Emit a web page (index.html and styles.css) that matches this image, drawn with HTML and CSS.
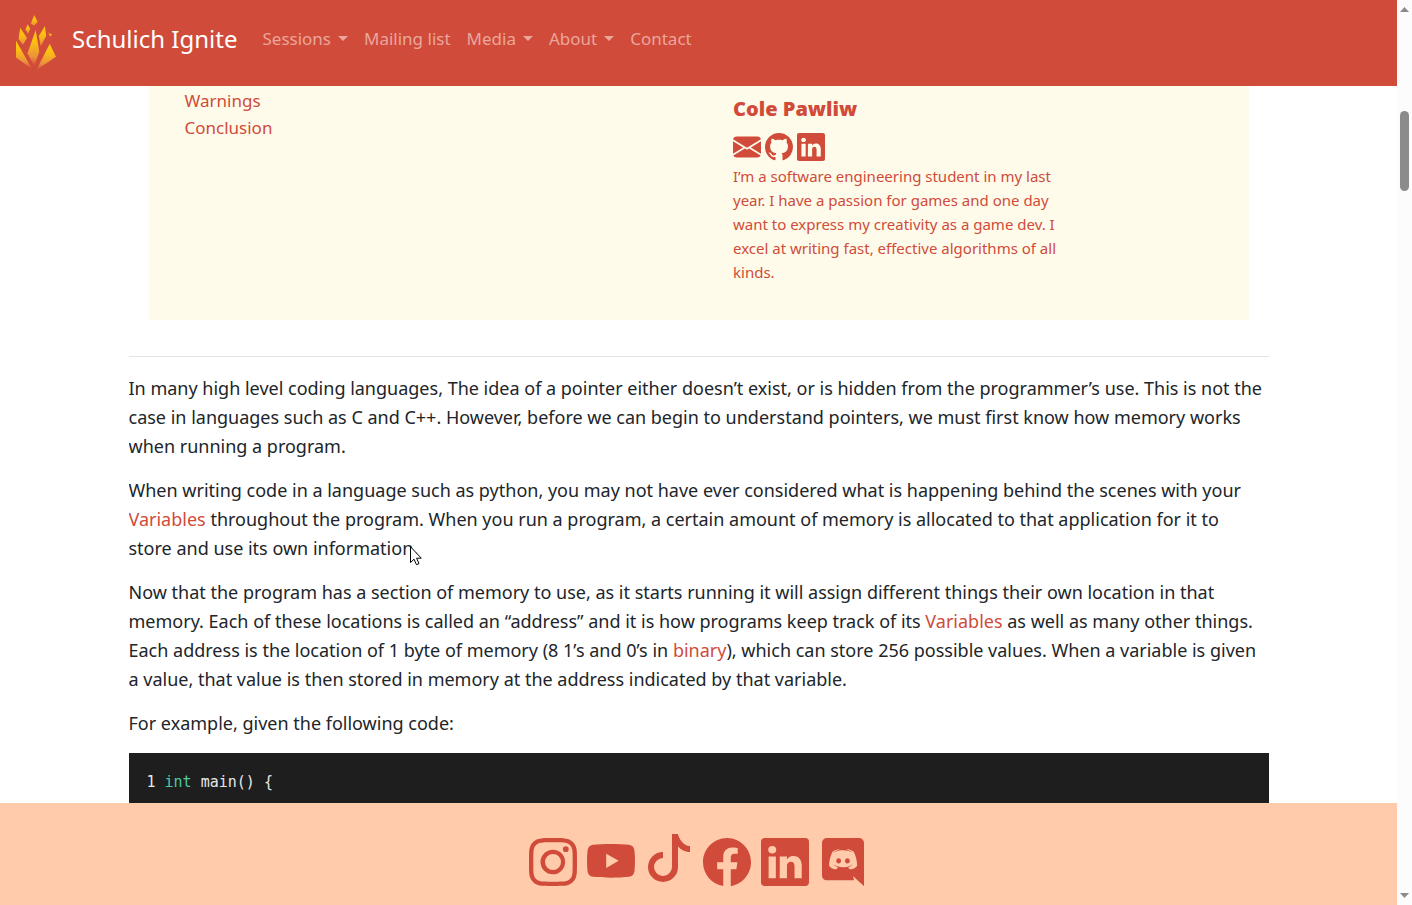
FILE: index.html
```html
<!DOCTYPE html>
<html lang="en">
<head>
<meta charset="utf-8">
<title>Pointers - Schulich Ignite</title>
<link rel="stylesheet" href="styles.css">
</head>
<body>
<div class="page">
  <header class="navbar">
    <a class="brand" href="#">
      <svg class="brand-logo" viewBox="0 0 40 56" aria-hidden="true">
        <defs>
          <linearGradient id="flame" x1="0" y1="0" x2="0" y2="1">
            <stop offset="0.4" stop-color="#fdc20f"/>
            <stop offset="1" stop-color="#ea8d38"/>
          </linearGradient>
          <linearGradient id="base" x1="0" y1="0" x2="0" y2="1">
            <stop offset="0.3" stop-color="#fdc20f"/>
            <stop offset="0.75" stop-color="#eb923a"/>
            <stop offset="1" stop-color="#d64b38"/>
          </linearGradient>
        </defs>
        <g fill="url(#flame)">
          <path d="M18.300 1L21.700 8L18 11.800L14.800 9.500Z"/>
          <path d="M11.700 10.300L14.200 15L12 20L9.500 15.300Z"/>
          <path d="M4.300 13.700L10.900 24L7 30.800L2.500 25Z"/>
          <path d="M28.900 12L30.200 22L24.700 32L22.800 22Z"/>
          <path d="M32.300 18.300L33.600 19.800L36.300 20L34 23Z"/>
        </g>
        <g fill="url(#base)">
          <path d="M19.700 16L23.300 37.700L18.300 52L11.500 39.300Z"/>
          <path d="M0 26.500L16 55L0 43.500Z"/>
          <path d="M33.700 29.800L40 42.700L20.500 56Z"/>
        </g>
      </svg>
      <span>Schulich Ignite</span>
    </a>
    <nav class="nav">
      <button class="nav-item dropdown" type="button">Sessions</button>
      <a class="nav-item" href="#">Mailing list</a>
      <button class="nav-item dropdown" type="button">Media</button>
      <button class="nav-item dropdown" type="button">About</button>
      <a class="nav-item" href="#">Contact</a>
    </nav>
  </header>

  <main class="content">
    <section class="card">
      <nav class="toc">
        <a href="#">Warnings</a>
        <a href="#">Conclusion</a>
      </nav>
      <div class="author">
        <h2 class="author-name">Cole Pawliw</h2>
        <div class="author-links">
          <a href="#" aria-label="Email"><svg viewBox="0 0 16 16"><path d="M.05 3.555A2 2 0 0 1 2 2h12a2 2 0 0 1 1.950 1.555L8 8.414.05 3.555ZM0 4.697v7.104l5.803-3.558L0 4.697ZM6.761 8.830l-6.570 4.027A2 2 0 0 0 2 14h12a2 2 0 0 0 1.808-1.144l-6.570-4.027L8 9.586l-1.239-.757Zm3.436-.586L16 11.801V4.697l-5.803 3.546Z"/></svg></a>
          <a href="#" aria-label="GitHub"><svg viewBox="0 0 16 16"><path d="M8 0C3.580 0 0 3.580 0 8c0 3.540 2.290 6.530 5.470 7.590.4.070.55-.17.55-.38 0-.19-.01-.82-.01-1.490-2.010.37-2.530-.49-2.690-.94-.09-.23-.48-.94-.82-1.130-.28-.15-.68-.52-.01-.53.63-.01 1.080.58 1.230.82.72 1.210 1.870.87 2.330.66.07-.52.28-.87.51-1.070-1.780-.2-3.640-.89-3.640-3.950 0-.87.31-1.590.82-2.150-.08-.2-.36-1.020.08-2.120 0 0 .67-.21 2.200.82.64-.18 1.320-.27 2-.27.68 0 1.360.09 2 .27 1.530-1.040 2.200-.82 2.200-.82.44 1.100.16 1.920.08 2.120.51.56.82 1.270.82 2.150 0 3.070-1.870 3.750-3.650 3.950.29.25.54.73.54 1.480 0 1.070-.01 1.930-.01 2.200 0 .21.15.46.55.38A8.012 8.012 0 0 0 16 8c0-4.420-3.580-8-8-8z"/></svg></a>
          <a href="#" aria-label="LinkedIn"><svg viewBox="0 0 16 16"><path d="M0 1.146C0 .513.526 0 1.175 0h13.650C15.474 0 16 .513 16 1.146v13.708c0 .633-.526 1.146-1.175 1.146H1.175C.526 16 0 15.487 0 14.854V1.146zm4.943 12.248V6.169H2.542v7.225h2.401zm-1.200-8.212c.837 0 1.358-.554 1.358-1.248-.015-.709-.52-1.248-1.342-1.248-.822 0-1.359.54-1.359 1.248 0 .694.521 1.248 1.327 1.248h.016zm4.908 8.212V9.359c0-.216.016-.432.08-.586.173-.431.568-.878 1.232-.878.869 0 1.216.662 1.216 1.634v3.865h2.401V9.250c0-2.220-1.184-3.252-2.764-3.252-1.274 0-1.845.7-2.165 1.193v.025h-.016a5.540 5.540 0 0 1 .016-.025V6.169h-2.400c.03.678 0 7.225 0 7.225h2.400z"/></svg></a>
        </div>
        <p class="author-bio">I’m a software engineering student in my last<br>year. I have a passion for games and one day<br>want to express my creativity as a game dev. I<br>excel at writing fast, effective algorithms of all<br>kinds.</p>
      </div>
    </section>

    <hr class="divider">

    <article class="article">
      <p>In many high level coding languages, The idea of a pointer either doesn’t exist, or is hidden from the programmer’s use. This is not the<br>case in languages such as C and C++. However, before we can begin to understand pointers, we must first know how memory works<br>when running a program.</p>
      <p>When writing code in a language such as python, you may not have ever considered what is happening behind the scenes with your<br><a href="#">Variables</a> throughout the program. When you run a program, a certain amount of memory is allocated to that application for it to<br>store and use its own information.</p>
      <p>Now that the program has a section of memory to use, as it starts running it will assign different things their own location in that<br>memory. Each of these locations is called an “address” and it is how programs keep track of its <a href="#">Variables</a> as well as many other things.<br>Each address is the location of 1 byte of memory (8 1’s and 0’s in <a href="#">binary</a>), which can store 256 possible values. When a variable is given<br>a value, that value is then stored in memory at the address indicated by that variable.</p>
      <p>For example, given the following code:</p>
      <pre class="code"><code>1 <span class="type">int</span> main() {</code></pre>
    </article>
  </main>

  <footer class="footer">
    <a href="#" aria-label="Instagram"><svg viewBox="0 0 16 16"><path d="M8 0C5.829 0 5.556.01 4.703.048 3.850.088 3.269.222 2.760.42a3.917 3.917 0 0 0-1.417.923A3.927 3.927 0 0 0 .42 2.760C.222 3.268.087 3.850.048 4.700.01 5.555 0 5.827 0 8.001c0 2.172.01 2.444.048 3.297.04.852.174 1.433.372 1.942.205.526.478.972.923 1.417.444.445.89.719 1.416.923.51.198 1.090.333 1.942.372C5.555 15.990 5.827 16 8 16s2.444-.01 3.298-.048c.851-.04 1.434-.174 1.943-.372a3.916 3.916 0 0 0 1.416-.923c.445-.445.718-.891.923-1.417.197-.509.332-1.090.372-1.942C15.990 10.445 16 10.173 16 8s-.01-2.445-.048-3.299c-.04-.851-.175-1.433-.372-1.941a3.926 3.926 0 0 0-.923-1.417A3.911 3.911 0 0 0 13.240.42c-.51-.198-1.092-.333-1.943-.372C10.443.01 10.172 0 7.998 0h.003zm-.717 1.442h.718c2.136 0 2.389.007 3.232.046.78.035 1.204.166 1.486.275.373.145.64.319.92.599.28.28.453.546.598.92.11.281.24.705.275 1.485.039.843.047 1.096.047 3.231s-.008 2.389-.047 3.232c-.035.78-.166 1.203-.275 1.485a2.470 2.470 0 0 1-.599.919c-.28.28-.546.453-.92.598-.28.11-.704.24-1.485.276-.843.038-1.096.047-3.232.047s-2.390-.009-3.233-.047c-.78-.036-1.203-.166-1.485-.276a2.478 2.478 0 0 1-.92-.598 2.480 2.480 0 0 1-.6-.92c-.109-.281-.24-.705-.275-1.485-.038-.843-.046-1.096-.046-3.233 0-2.136.008-2.388.046-3.231.036-.78.166-1.204.276-1.486.145-.373.319-.64.599-.92.28-.28.546-.453.92-.598.282-.11.705-.24 1.485-.276.738-.034 1.024-.044 2.515-.045v.002zm4.988 1.328a.96.96 0 1 0 0 1.920.96.96 0 0 0 0-1.920zm-4.270 1.122a4.109 4.109 0 1 0 0 8.217 4.109 4.109 0 0 0 0-8.217zm0 1.441a2.667 2.667 0 1 1 0 5.334 2.667 2.667 0 0 1 0-5.334z"/></svg></a>
    <a href="#" aria-label="YouTube"><svg viewBox="0 0 16 16"><path fill-rule="evenodd" d="M8 2C5.800 2 3.500 2.080 2 2.260C.9 2.400.3 3.100.16 4.300C-.05 6.300-.05 8.900.16 10.900C.3 12.100.9 12.800 2 12.940C5.200 13.320 10.800 13.320 14 12.940C15.100 12.800 15.700 12.100 15.840 10.900C16.050 8.900 16.050 6.300 15.840 4.300C15.700 3.100 15.100 2.400 14 2.260C12.500 2.080 10.200 2 8 2ZM6.400 5.209V9.990L10.557 7.604Z"/></svg></a>
    <a class="raised" href="#" aria-label="TikTok"><svg viewBox="0 0 16 16"><path d="M9 0h1.980c.144.715.54 1.617 1.235 2.512C12.895 3.389 13.797 4 15 4v2c-1.753 0-3.070-.814-4-1.829V11a5 5 0 1 1-5-5v2a3 3 0 1 0 3 3V0Z"/></svg></a>
    <a href="#" aria-label="Facebook"><svg viewBox="0 0 16 16"><path d="M16 8.049c0-4.446-3.582-8.050-8-8.050C3.580 0-.002 3.603-.002 8.050c0 4.017 2.926 7.347 6.750 7.951v-5.625h-2.030V8.050H6.750V6.275c0-2.017 1.195-3.131 3.022-3.131.876 0 1.791.157 1.791.157v1.980h-1.009c-.993 0-1.303.621-1.303 1.258v1.510h2.218l-.354 2.326H9.250V16c3.824-.604 6.750-3.934 6.750-7.951z"/></svg></a>
    <a href="#" aria-label="LinkedIn"><svg viewBox="0 0 16 16"><path d="M0 1.146C0 .513.526 0 1.175 0h13.650C15.474 0 16 .513 16 1.146v13.708c0 .633-.526 1.146-1.175 1.146H1.175C.526 16 0 15.487 0 14.854V1.146zm4.943 12.248V6.169H2.542v7.225h2.401zm-1.200-8.212c.837 0 1.358-.554 1.358-1.248-.015-.709-.52-1.248-1.342-1.248-.822 0-1.359.54-1.359 1.248 0 .694.521 1.248 1.327 1.248h.016zm4.908 8.212V9.359c0-.216.016-.432.08-.586.173-.431.568-.878 1.232-.878.869 0 1.216.662 1.216 1.634v3.865h2.401V9.250c0-2.220-1.184-3.252-2.764-3.252-1.274 0-1.845.7-2.165 1.193v.025h-.016a5.540 5.540 0 0 1 .016-.025V6.169h-2.400c.03.678 0 7.225 0 7.225h2.400z"/></svg></a>
    <a href="#" aria-label="Discord"><svg viewBox="0 0 16 16"><path d="M6.552 6.712c-.456 0-.816.4-.816.888s.368.888.816.888c.456 0 .816-.4.816-.888.008-.488-.36-.888-.816-.888zm2.920 0c-.456 0-.816.4-.816.888s.368.888.816.888c.456 0 .816-.4.816-.888s-.36-.888-.816-.888z"/><path d="M13.360 0H2.640C1.736 0 1 .736 1 1.648v10.816c0 .912.736 1.648 1.640 1.648h9.072l-.424-1.480 1.024.952.968.896L15 16V1.648C15 .736 14.264 0 13.360 0zm-3.088 10.448s-.288-.344-.528-.648c1.048-.296 1.448-.952 1.448-.952-.328.216-.64.368-.92.472-.4.168-.784.28-1.160.344a5.604 5.604 0 0 1-2.072-.008 6.716 6.716 0 0 1-1.176-.344 4.688 4.688 0 0 1-.584-.272c-.024-.016-.048-.024-.072-.04-.016-.008-.024-.016-.032-.024-.144-.08-.224-.136-.224-.136s.384.64 1.400.944c-.24.304-.536.664-.536.664-1.768-.056-2.440-1.216-2.440-1.216 0-2.576 1.152-4.664 1.152-4.664 1.152-.864 2.248-.84 2.248-.84l.08.096c-1.440.416-2.104 1.048-2.104 1.048s.176-.096.472-.232c.856-.376 1.536-.48 1.816-.504.048-.008.088-.016.136-.016a6.521 6.521 0 0 1 4.024.752s-.632-.6-1.992-1.016l.112-.128s1.096-.024 2.248.84c0 0 1.152 2.088 1.152 4.664 0 0-.68 1.160-2.448 1.216z"/></svg></a>
  </footer>
</div>

<div class="scrollbar" aria-hidden="true">
  <svg class="arrow" viewBox="0 0 9 5"><path d="M4.500 0L9 5H0Z"/></svg>
  <div class="track"><div class="thumb"></div></div>
  <svg class="arrow" viewBox="0 0 9 5"><path d="M0 0H9L4.500 5Z"/></svg>
</div>

<svg class="cursor" viewBox="0 0 12 20" aria-hidden="true"><path d="M.5.8V16.500L4 13.200L6.500 18.700L9 17.600L6.600 12.200H11.300Z"/></svg>
</body>
</html>
```

FILE: styles.css
```css
* {
  box-sizing: border-box;
}

body {
  margin: 0;
  height: 100vh;
  display: flex;
  overflow: hidden;
  background: #fff;
  color: #212529;
  font-family: "Segoe UI", "Noto Sans", sans-serif;
  font-size: 18px;
  line-height: 29px;
}

a {
  color: #d04b3a;
  text-decoration: none;
}

svg {
  display: block;
  fill: currentColor;
}

.page {
  flex: 1;
  min-width: 0;
  display: flex;
  flex-direction: column;
}

.navbar {
  display: flex;
  align-items: center;
  gap: 17px;
  padding: 14px 16px 16px;
  background: #d04b3a;
}

.brand {
  display: flex;
  align-items: center;
  gap: 16px;
  color: #fff;
  font-size: 24px;
  white-space: nowrap;
}

.brand span {
  padding-bottom: 8px;
}

.brand-logo {
  width: 40px;
  height: 56px;
}

.nav {
  display: flex;
  padding-bottom: 7px;
}

.nav-item {
  display: flex;
  align-items: center;
  padding: 0 8px;
  border: 0;
  background: none;
  color: #eba69b;
  font: inherit;
  font-size: 17px;
  white-space: nowrap;
}

.dropdown::after {
  content: "";
  margin-left: 7px;
  margin-bottom: 1px;
  border: 5px solid transparent;
  border-top-color: currentColor;
  border-bottom: 0;
}

.content {
  flex: 1;
  min-height: 0;
  overflow: hidden;
  width: 100%;
  max-width: 1140px;
  margin: 0 auto;
}

.card {
  display: grid;
  grid-template-columns: 1fr 1fr;
  gap: 68px;
  margin: 0 20px 36px;
  padding: 1px 35px 36px 36px;
  background: #fffbea;
}

.toc {
  display: flex;
  flex-direction: column;
  font-size: 17px;
  line-height: 27px;
}

.author {
  color: #d04b3a;
  font-size: 15px;
  line-height: 24px;
}

.author-name {
  margin: 7px 0 10px;
  font-family: "Open Sans", sans-serif;
  font-size: 20px;
  font-weight: 800;
  line-height: 29px;
}

.author-links {
  display: flex;
  gap: 4px;
}

.author-links svg {
  width: 28px;
  height: 28px;
}

.author-bio {
  margin: 3px 0 0;
  white-space: nowrap;
}

.divider {
  margin: 0 0 17px;
  border: 0;
  border-top: 1px solid #e4e4e5;
}

.article p {
  margin: 0 0 15px;
  white-space: nowrap;
}

.code {
  margin: 0;
  padding: 15px 18px;
  background: #1e1e1e;
  color: #e6e6e6;
  font-family: "DejaVu Sans Mono", monospace;
  font-size: 15px;
}

.code code {
  font: inherit;
}

.type {
  color: #4ec9a4;
}

.footer {
  display: flex;
  justify-content: center;
  gap: 10px;
  padding: 35px 1px 19px 0;
  background: #ffcbab;
}

.footer svg {
  width: 48px;
  height: 48px;
}

.footer .raised {
  margin-top: -4px;
}

.scrollbar {
  width: 15px;
  display: flex;
  flex-direction: column;
  align-items: center;
  padding: 7px 0;
  background: #fcfcfc;
  color: #8b8b8b;
}

.arrow {
  width: 9px;
  height: 5px;
}

.track {
  flex: 1;
  padding-top: 99px;
}

.thumb {
  width: 9px;
  height: 80px;
  border-radius: 5px;
  background: #8b8b8b;
}

.cursor {
  position: absolute;
  left: 410px;
  top: 546px;
  width: 12px;
  height: 20px;
  fill: #fff;
  stroke: #000;
}
```
